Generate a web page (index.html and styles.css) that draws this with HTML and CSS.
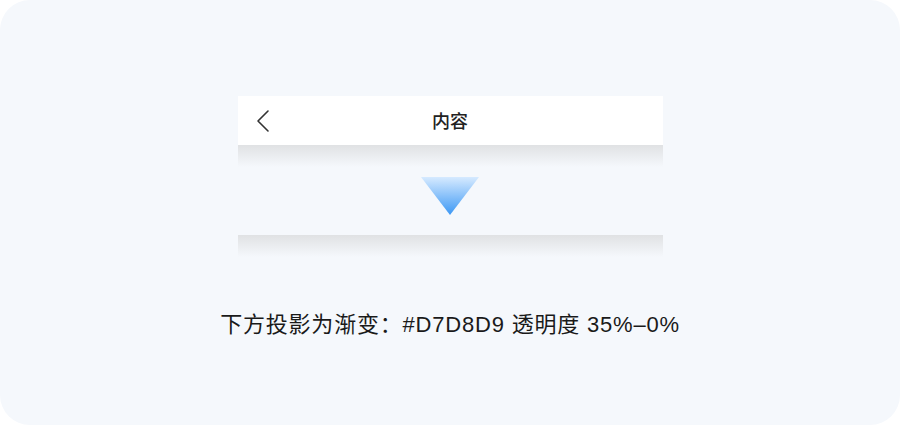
FILE: index.html
```html
<!DOCTYPE html>
<html lang="zh-CN">
<head>
  <meta charset="UTF-8" />
  <title>投影说明</title>
  <link rel="stylesheet" href="styles.css">
</head>
<body>
  <div class="board">
    <div class="demo">
      <div class="nav-bar">
        <svg class="back" width="14" height="24" viewBox="0 0 14 24">
          <path d="M12 2 L2 12 L12 22" fill="none" stroke="#333" stroke-width="1.6" stroke-linecap="round" stroke-linejoin="round"/>
        </svg>
        <div class="nav-title">内容</div>
      </div>
      <div class="shade"></div>
      <div class="arrow-row">
        <div class="arrow"></div>
      </div>
      <div class="shade"></div>
    </div>
    <p class="note">下方投影为渐变：#D7D8D9 透明度 35%–0%</p>
  </div>
</body>
</html>
```

FILE: styles.css
```css
html, body {
  margin: 0;
  background: #ffffff;
}

body {
  font-family: "Noto Sans CJK SC", "Noto Sans", sans-serif;
  color: #1f1f1f;
}

.board {
  width: 900px;
  height: 425px;
  box-sizing: border-box;
  border-radius: 30px;
  background: #f5f8fc;
  padding-top: 96px;
  display: flex;
  flex-direction: column;
  align-items: center;
}

.demo {
  width: 425px;
}

.nav-bar {
  height: 49px;
  background: #ffffff;
  display: flex;
  align-items: center;
  position: relative;
}

.back {
  margin-left: 18px;
}

.nav-title {
  position: absolute;
  left: 0;
  right: 0;
  text-align: center;
  font-size: 18px;
  font-weight: 500;
  color: #222222;
  line-height: 49px;
}

.shade {
  height: 22px;
  background: linear-gradient(to bottom, rgba(215, 216, 217, 0.7), rgba(215, 216, 217, 0));
}

.arrow-row {
  height: 68px;
  display: flex;
  justify-content: center;
  padding-top: 10px;
  box-sizing: border-box;
}

.arrow {
  width: 58px;
  height: 38px;
  clip-path: polygon(0 0, 100% 0, 50% 100%);
  background: linear-gradient(to bottom, #d6eaff, #3c98f4);
}

.note {
  margin: 49px 0 0;
  font-family: "Liberation Sans", "Noto Sans CJK SC", sans-serif;
  font-size: 22px;
  letter-spacing: 0.8px;
  color: #1a1a1a;
}
```
